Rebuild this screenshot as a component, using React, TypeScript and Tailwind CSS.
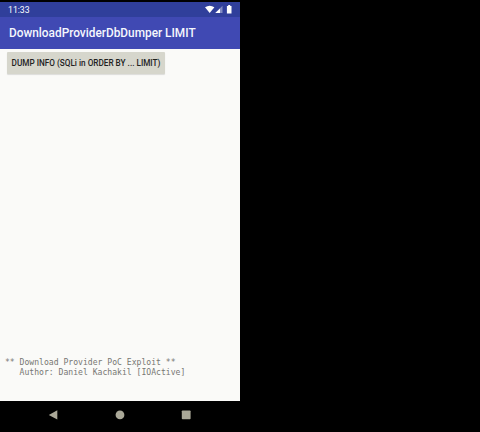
function StatusBar() {
  return (
    <div className="flex h-[15px] shrink-0 items-center justify-between bg-[#303f9b] pr-[7px] pl-2">
      <span className="pt-px text-[8.7px] leading-none text-white">11:33</span>
      <svg width="28" height="9" viewBox="0 0 28 9" fill="#fff">
        <path d="M0 2.2Q4.7-.8 9.4 2.2L4.7 8Z" />
        <path d="M17.5 .8V8H10.3Z" fillOpacity=".4" />
        <path d="M15 3.4V8H10.3Z" />
        <path d="M23.2 0h2v1h1.3v7.4h-4.6V1h1.3Z" />
      </svg>
    </div>
  );
}

function NavBar() {
  return (
    <div className="flex h-[31px] shrink-0 items-start bg-black pt-[8px] pl-12">
      <svg width="10" height="12" viewBox="0 0 10 12" className="text-[#aaa898]">
        <path d="M9.3 1.2V10.6L.8 5.9Z" fill="currentColor" />
      </svg>
      <svg width="10" height="12" viewBox="0 0 10 12" className="ml-[57px] text-[#aaa898]">
        <circle cx="5" cy="5.9" r="4.4" fill="currentColor" />
      </svg>
      <svg width="10" height="12" viewBox="0 0 10 12" className="ml-[56px] text-[#aaa898]">
        <rect x=".8" y="1.4" width="8.8" height="8.8" rx=".8" fill="currentColor" />
      </svg>
    </div>
  );
}

export default function App() {
  return (
    <div className="h-[432px] w-[480px] overflow-hidden bg-black pt-[2px] font-['Roboto',sans-serif]">
      <div className="flex h-[430px] w-60 flex-col">
        <StatusBar />
        <header className="flex h-8 shrink-0 items-center bg-[#4049b3] pt-[2px] pl-[9px]">
          <h1 className="text-[11.85px] leading-none font-medium whitespace-nowrap text-[#f5f7fd]">
            DownloadProviderDbDumper LIMIT
          </h1>
        </header>
        <main className="flex min-h-0 flex-1 flex-col items-start justify-between bg-[#fafaf8] pt-[3px] pb-[24px]">
          <button className="ml-[7px] flex h-[22px] w-[158px] items-center justify-center rounded-[1px] bg-[#d6d6cc] pt-px text-[8.2px] font-medium whitespace-nowrap text-[#22221f] shadow-[0_1px_1px_rgba(0,0,0,0.12)]">
            DUMP INFO (SQLi in ORDER BY ... LIMIT)
          </button>
          <pre className="ml-[5px] font-['DejaVu_Sans_Mono',monospace] text-[8.1px] leading-[9.5px] text-[#777773]">
            {"** Download Provider PoC Exploit **\n   Author: Daniel Kachakil [IOActive]"}
          </pre>
        </main>
        <NavBar />
      </div>
    </div>
  );
}
